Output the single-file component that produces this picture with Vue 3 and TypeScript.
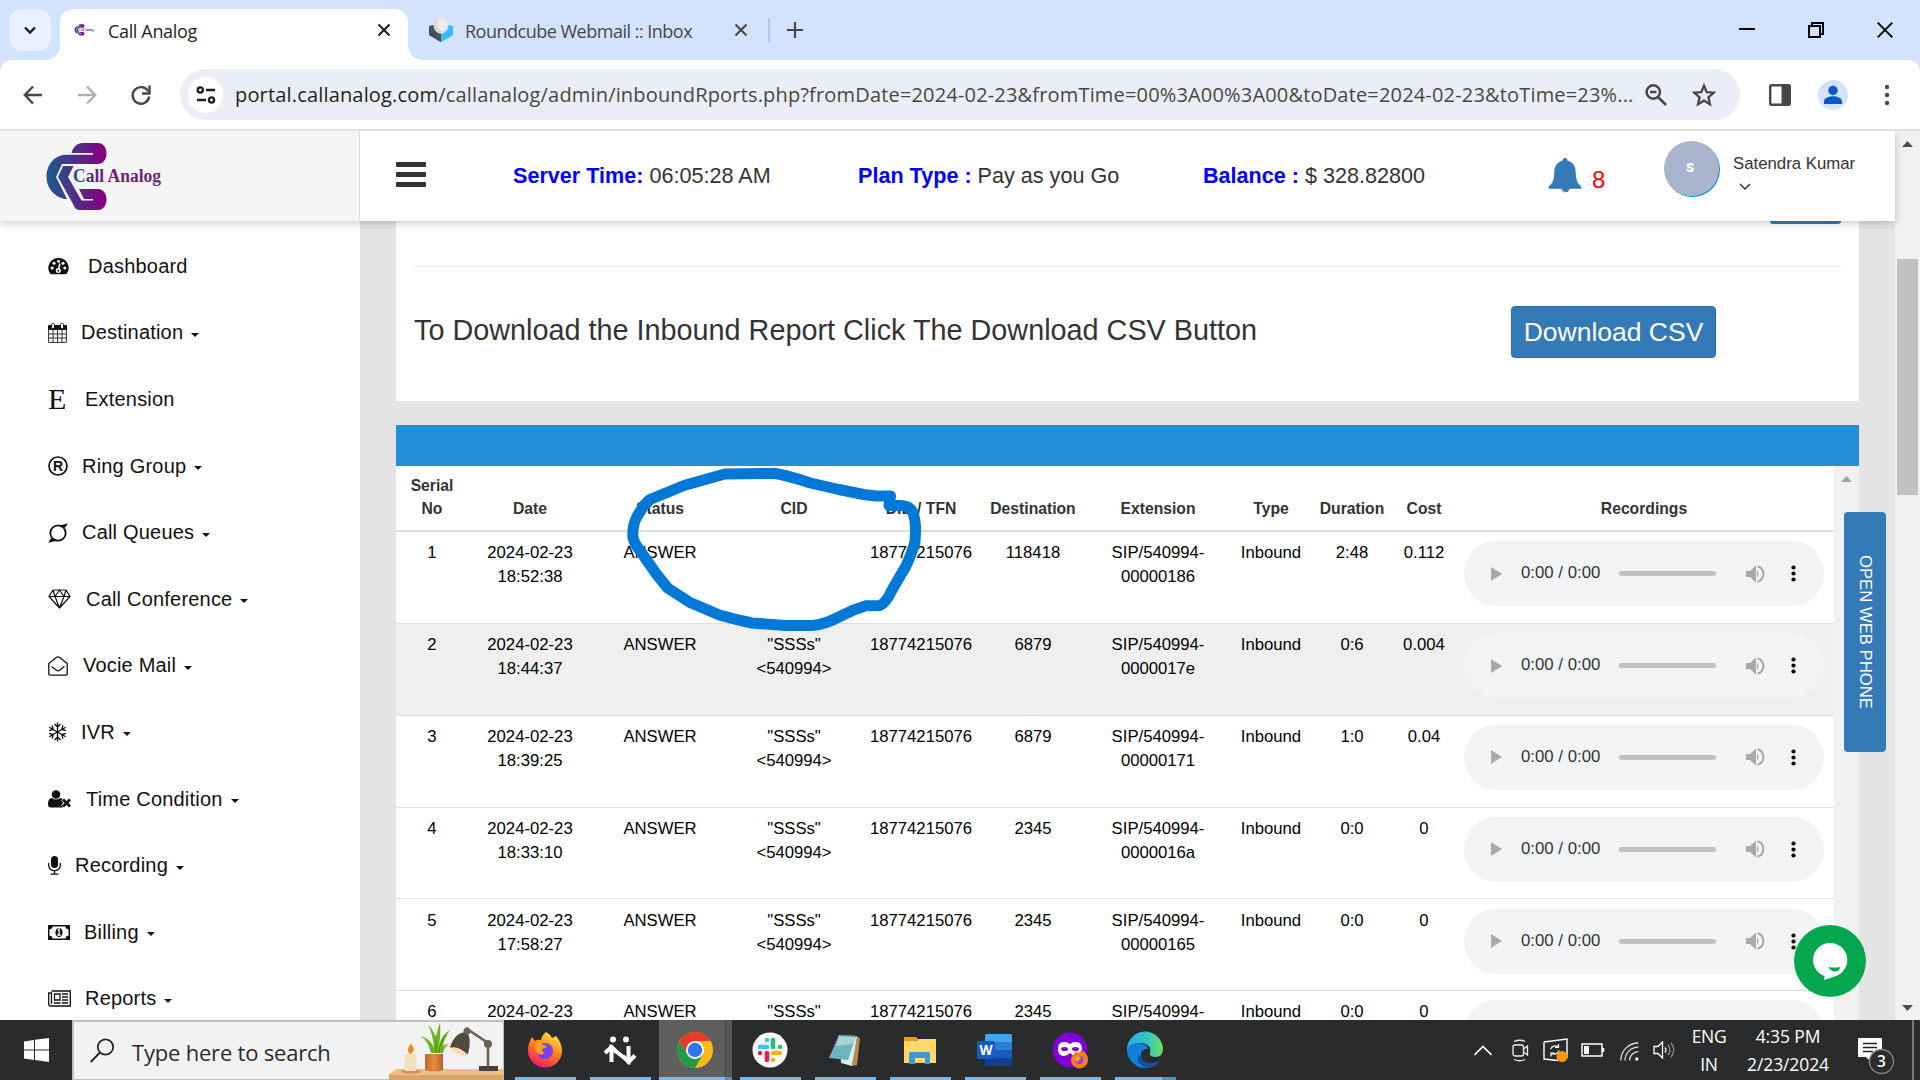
<script setup lang="ts">
interface MenuItem { label: string; icon: string; width: number; gap: number; caret: boolean }
interface Call { no: number; date: string; time: string; cid: boolean; dest: string; ext: string; dur: string; cost: string }

const menu: MenuItem[] = [
  { label: 'Dashboard', icon: 'dash', width: 21, gap: 19, caret: false },
  { label: 'Destination', icon: 'calendar', width: 19, gap: 14, caret: true },
  { label: 'Extension', icon: 'e', width: 18, gap: 19, caret: false },
  { label: 'Ring Group', icon: 'reg', width: 20, gap: 14, caret: true },
  { label: 'Call Queues', icon: 'queue', width: 20, gap: 14, caret: true },
  { label: 'Call Conference', icon: 'diamond', width: 23, gap: 15, caret: true },
  { label: 'Vocie Mail', icon: 'mail', width: 20, gap: 15, caret: true },
  { label: 'IVR', icon: 'snow', width: 19, gap: 14, caret: true },
  { label: 'Time Condition', icon: 'user', width: 23, gap: 15, caret: true },
  { label: 'Recording', icon: 'mic', width: 13, gap: 14, caret: true },
  { label: 'Billing', icon: 'money', width: 22, gap: 14, caret: true },
  { label: 'Reports', icon: 'news', width: 23, gap: 14, caret: true },
]

const columns: [string, number][] = [
  ['Serial No', 72], ['Date', 124], ['Status', 136], ['CID', 132], ['DID / TFN', 122], ['Destination', 102],
  ['Extension', 148], ['Type', 78], ['Duration', 84], ['Cost', 60], ['Recordings', 380],
]

const calls: Call[] = [
  { no: 1, date: '2024-02-23', time: '18:52:38', cid: false, dest: '118418', ext: '00000186', dur: '2:48', cost: '0.112' },
  { no: 2, date: '2024-02-23', time: '18:44:37', cid: true, dest: '6879', ext: '0000017e', dur: '0:6', cost: '0.004' },
  { no: 3, date: '2024-02-23', time: '18:39:25', cid: true, dest: '6879', ext: '00000171', dur: '1:0', cost: '0.04' },
  { no: 4, date: '2024-02-23', time: '18:33:10', cid: true, dest: '2345', ext: '0000016a', dur: '0:0', cost: '0' },
  { no: 5, date: '2024-02-23', time: '17:58:27', cid: true, dest: '2345', ext: '00000165', dur: '0:0', cost: '0' },
  { no: 6, date: '2024-02-23', time: '', cid: true, dest: '2345', ext: '', dur: '0:0', cost: '0' },
]
const hovered = 2

const apps = ['firefox', 'remote', 'chrome', 'slack', 'notepad', 'folder', 'word', 'private', 'edge']
</script>

<template>
  <div class="screen">
    <div class="tabstrip">
      <div class="tabsearch">
        <svg width="42" height="42" viewBox="0 0 42 42"><path d="M16 18.5l5 5 5-5" fill="none" stroke="#1f1f1f" stroke-width="2.4" /></svg>
      </div>
      <div class="tab active">
        <svg class="fav" width="20" height="14" viewBox="44 141 120 72">
          <use href="#brand" />
        </svg>
        <span class="tabtitle t1">Call Analog</span>
        <svg class="close" width="14" height="14" viewBox="0 0 14 14"><path d="M1.5 1.5l11 11m0-11l-11 11" stroke="#1f1f1f" stroke-width="2.1" /></svg>
      </div>
      <div class="tab other">
        <svg class="cube" width="26" height="26" viewBox="0 0 26 26">
          <path d="M1 9l12 7v9L1 18z" fill="#37474f" /><path d="M25 9l-12 7v9l12-7z" fill="#37beff" />
          <ellipse cx="13" cy="9" rx="8" ry="8.5" fill="#d8d8d8" /><ellipse cx="14.5" cy="7.5" rx="5.5" ry="6.5" fill="#ececec" />
          <path d="M1 9l4.500-1c0 5 3 8 7.500 9v8l-12-7z" fill="#465258" /><path d="M25 9l-4.500-1c0 5-3 8-7.500 9v8l12-7z" fill="#37beff" />
        </svg>
        <span class="tabtitle t2">Roundcube Webmail :: Inbox</span>
        <svg class="close" width="14" height="14" viewBox="0 0 14 14"><path d="M1.500 1.500l11 11m0-11l-11 11" stroke="#474747" stroke-width="2.100" /></svg>
      </div>
      <i class="tabsep"></i>
      <svg class="plus" width="16" height="16" viewBox="0 0 16 16"><path d="M8 0v16M0 8h16" stroke="#474747" stroke-width="2.200" /></svg>
      <div class="winbtns">
        <svg width="16" height="16" viewBox="0 0 16 16"><path d="M0 7h16" stroke="#000" stroke-width="2" /></svg>
        <svg width="16" height="16" viewBox="0 0 16 16"><path d="M1 4h11v11H1zM4 4V1h11v11h-3" fill="none" stroke="#000" stroke-width="2" /></svg>
        <svg width="16" height="16" viewBox="0 0 16 16"><path d="M.7.7l14.600 14.600m0-14.600L.7 15.300" stroke="#000" stroke-width="1.900" /></svg>
      </div>
    </div>

    <div class="toolbarwrap"><div class="toolbar">
      <svg class="back" width="20" height="20" viewBox="0 0 20 20"><path d="M19 10H2M10 1.500L1.800 10l8.200 8.500" fill="none" stroke="#474747" stroke-width="2.400" /></svg>
      <svg class="fwd" width="20" height="20" viewBox="0 0 20 20"><path d="M1 10h17M10 1.500l8.200 8.500-8.200 8.500" fill="none" stroke="#b0b0b0" stroke-width="2.400" /></svg>
      <svg class="reload" width="20" height="20" viewBox="0 0 20 20"><path d="M17.300 6.500A8.300 8.300 0 1 0 18.200 11.500" fill="none" stroke="#474747" stroke-width="2.400" /><path d="M18.500.5v8H11" fill="none" stroke="#474747" stroke-width="2.400" /></svg>
      <div class="omnibox">
        <span class="siteinfo"><svg width="20" height="18" viewBox="0 0 20 18"><g fill="none" stroke="#1f1f1f" stroke-width="2.400"><circle cx="4.300" cy="4" r="2.600" /><path d="M10 4h9M1 14h9" /><circle cx="15.500" cy="14" r="2.600" /></g></svg></span>
        <span class="url"><b>portal.callanalog.com</b>/callanalog/admin/inboundRports.php?fromDate=2024-02-23&amp;fromTime=00%3A00%3A00&amp;toDate=2024-02-23&amp;toTime=23%...</span>
        <svg class="zoomout" width="22" height="22" viewBox="0 0 22 22"><g fill="none" stroke="#474747" stroke-width="2.500"><circle cx="8.300" cy="8" r="6.700" /><path d="M13 13l8 8M5 8h6.500" /></g></svg>
        <svg class="star" width="24" height="24" viewBox="0 0 24 24"><path d="M12 2.600l2.700 6.500 7 .600-5.300 4.600 1.600 6.900-6-3.700-6 3.700 1.600-6.900L2.300 9.700l7-.600z" fill="none" stroke="#474747" stroke-width="2.300" /></svg>
      </div>
      <svg class="side" width="22" height="22" viewBox="0 0 22 22"><rect x="1.200" y="1.200" width="19.600" height="19.600" rx="1.500" fill="none" stroke="#474747" stroke-width="2.400" /><path d="M12.500 1h8.500v20h-8.500z" fill="#474747" /></svg>
      <span class="profile"><svg width="30" height="30" viewBox="0 0 30 30"><circle cx="15" cy="10.500" r="4.700" fill="#0b57d0" /><path d="M6 24v-2.500c0-4 6-5.300 9-5.300s9 1.300 9 5.300V24z" fill="#0b57d0" /></svg></span>
      <svg class="kebab" width="6" height="22" viewBox="0 0 6 22"><g fill="#474747"><circle cx="3" cy="3" r="2.200" /><circle cx="3" cy="11" r="2.200" /><circle cx="3" cy="19" r="2.200" /></g></svg>
    </div></div>

    <div class="page">
      <div class="site">
        <header class="head">
          <div class="brand">
            <svg width="130" height="72" viewBox="40 140 130 72">
              <defs>
                <linearGradient id="lg" gradientUnits="userSpaceOnUse" x1="46" y1="0" x2="104" y2="0"><stop offset="0" stop-color="#1a5c8c" /><stop offset="1" stop-color="#83017f" /></linearGradient>
                <linearGradient id="lt" gradientUnits="userSpaceOnUse" x1="73" y1="0" x2="161" y2="0"><stop offset="0" stop-color="#27488a" /><stop offset=".45" stop-color="#83107f" /><stop offset="1" stop-color="#5b3486" /></linearGradient>
                <g id="brand">
                  <path fill="url(#lg)" d="M71.500 153C73 147 77 143 83 143h15c5 0 8.500 4.500 8.500 10.500S103 164 98 164H62l-6 13 11 22h-3C53 196 46.500 187 46.500 177c0-12 8-22 19-22.300H93V153z" />
                  <path fill="url(#lg)" d="M63 166h10.500L68 177l13.500 23.500H93V199H84l-5-10h19c5 0 8.500 4.500 8.500 10.500S103 210 98 210H79c-3 0-4.500-3-6-6l-15-27z" />
                  <text x="73" y="182" font-family="Liberation Serif" font-weight="700" font-size="18.500" textLength="88" lengthAdjust="spacingAndGlyphs" fill="url(#lt)">Call Analog</text>
                </g>
              </defs>
              <use href="#brand" />
            </svg>
          </div>
          <div class="topbar">
            <div class="burger"><i></i><i></i><i></i></div>
            <span class="stat s1"><b>Server Time:</b> 06:05:28 AM</span>
            <span class="stat s2"><b>Plan Type :</b> Pay as you Go</span>
            <span class="stat s3"><b>Balance :</b> $ 328.82800</span>
            <svg class="bell" width="34" height="36" viewBox="0 0 34 36"><path d="M17 0c1.500 0 2.400 1 2.200 2.500C25 4 27.600 8.500 27.700 14c.1 8 2 11.500 5.500 14.500.8.800.3 2.200-1 2.200H21.500a4.600 4.600 0 0 1-9 0H1.800c-1.300 0-1.800-1.400-1-2.200C4.300 25.500 6.200 22 6.300 14 6.400 8.500 9 4 14.800 2.500 14.600 1 15.500 0 17 0z" fill="#337ab7" /><path d="M13.500 31c.3 2 1.500 3 3.300 3" fill="none" stroke="#fff" stroke-width="1" /></svg>
            <span class="count">8</span>
            <span class="avatar">S</span>
            <div class="who"><span>Satendra Kumar</span>
              <svg width="12" height="8" viewBox="0 0 12 8"><path d="M1 1l5 5 5-5" fill="none" stroke="#333" stroke-width="1.500" /></svg>
            </div>
          </div>
        </header>

        <div class="body">
          <nav class="sidebar">
            <a v-for="m in menu" :key="m.label" class="item">
              <span class="ico" :style="{ width: m.width + 'px', marginRight: m.gap + 'px' }">
                <svg v-if="m.icon === 'dash'" width="21" height="18" viewBox="0 0 21 18"><path d="M2 16.500A10.200 10.200 0 1 1 19 16.500q-.5.800-1.500.8h-14q-1 0-1.500-.8z" fill="#111" /><g fill="#fff"><circle cx="4.200" cy="11" r="1.500" /><circle cx="6" cy="6.300" r="1.500" /><circle cx="10.500" cy="4.300" r="1.500" /><circle cx="15" cy="6.300" r="1.500" /><circle cx="16.800" cy="11" r="1.500" /><circle cx="10.300" cy="13.500" r="2.500" /></g><path d="M10.300 13.500l1.600-7" stroke="#fff" stroke-width="1.500" /><circle cx="10.300" cy="13.800" r="1" fill="#111" /></svg>
                <svg v-else-if="m.icon === 'calendar'" width="19" height="20" viewBox="0 0 19 20"><path d="M0 3q0-1 1-1h17q1 0 1 1v4H0z" fill="#111" /><path d="M.6 7v12.400h17.800V7M.5 11h18M.5 15h18M5 7v12.500M9.500 7v12.500M14 7v12.500" fill="none" stroke="#333" stroke-width="1" /><rect x="3.500" y=".5" width="3" height="5" rx="1.200" fill="#fff" stroke="#111" /><rect x="12.500" y=".5" width="3" height="5" rx="1.200" fill="#fff" stroke="#111" /></svg>
                <span v-else-if="m.icon === 'e'" class="serif">E</span>
                <svg v-else-if="m.icon === 'reg'" width="20" height="20" viewBox="0 0 20 20"><circle cx="10" cy="10" r="9" fill="none" stroke="#111" stroke-width="1.700" /><text x="10.200" y="15" text-anchor="middle" font-family="Liberation Sans" font-weight="700" font-size="14" fill="#111">R</text></svg>
                <svg v-else-if="m.icon === 'queue'" width="20" height="20" viewBox="0 0 20 20"><circle cx="10" cy="10" r="7.700" fill="none" stroke="#111" stroke-width="1.800" /><path d="M8 2Q14 2.500 19.600.2 18 4.500 16 5zM12 18Q6 17.500.4 19.800 2 15.500 4 15z" fill="#111" /></svg>
                <svg v-else-if="m.icon === 'diamond'" width="23" height="20" viewBox="0 0 23 20"><path d="M5 1h13l4 6.500L11.500 19 1 7.500zM1 7.500h21M7 7.500L11.500 19 16 7.500M5 1l2 6.500L11.500 1 16 7.500 18 1" fill="none" stroke="#111" stroke-width="1.200" stroke-linejoin="round" /></svg>
                <svg v-else-if="m.icon === 'mail'" width="20" height="20" viewBox="0 0 20 20"><path d="M.8 7.500Q5 4 8.500 1.400q1.500-1 3 0Q15 4 19.200 7.500V18q0 1.200-1.200 1.200H2Q.8 19.200.8 18z" fill="none" stroke="#111" stroke-width="1.300" /><path d="M3.500 10.500l5 3.800q1.500 1 3 0l5-3.800" fill="none" stroke="#111" stroke-width="1.300" /></svg>
                <svg v-else-if="m.icon === 'snow'" width="19" height="20" viewBox="0 0 19 20"><g stroke="#111" stroke-width="1.300" fill="none"><g v-for="a in [0, 60, 120, 180, 240, 300]" :key="a" :transform="`rotate(${a} 9.500 10)`"><path d="M9.500 10V.5M6.500 2l3 3 3-3" /></g></g></svg>
                <svg v-else-if="m.icon === 'user'" width="23" height="18" viewBox="0 0 23 18"><circle cx="8" cy="4.500" r="4.300" fill="#111" /><path d="M0 14c0-4 1.500-6 3.800-6Q8 11 12.200 8c1 0 1.800.5 2.400 1.200l-1.300 1.300 2 2.200-2 2.200 1.800 2.300-1 .3H3Q0 17.500 0 14z" fill="#111" /><path d="M15 9.500l7 7m0-7l-7 7" stroke="#111" stroke-width="2.700" /></svg>
                <svg v-else-if="m.icon === 'mic'" width="13" height="19" viewBox="0 0 13 19"><rect x="3" y="0" width="7" height="12" rx="3.500" fill="#111" /><path d="M.7 7v2.500a5.800 5.200 0 0 0 11.600 0V7M6.500 15v3M2.500 18.200h8" fill="none" stroke="#111" stroke-width="1.300" /></svg>
                <svg v-else-if="m.icon === 'money'" width="22" height="15" viewBox="0 0 22 15"><rect x="0" y="0" width="22" height="15" fill="#111" /><path d="M4.500 1.500h13q0 2.800 3 2.800v6.400q-3 0-3 2.800h-13q0-2.800-3-2.800V4.300q3 0 3-2.800z" fill="#fff" /><ellipse cx="11" cy="7.500" rx="3.600" ry="4.600" fill="#111" /><path d="M9.700 5l1.300-.9v5.400M9.300 10h3.500" fill="none" stroke="#fff" stroke-width="1.300" /></svg>
                <svg v-else width="23" height="17" viewBox="0 0 23 17"><path d="M3.500 1h18.800v15H2.500Q.7 16 .7 14V3h2.800v11" fill="none" stroke="#111" stroke-width="1.300" /><path d="M6.500 4h5.500v6H6.500zM14 4h6M14 7h6M14 10h6M6 13h6.500M14 13h6" fill="none" stroke="#111" stroke-width="1.300" /></svg>
              </span>
              <span class="lbl">{{ m.label }}</span><i v-if="m.caret" class="caret"></i>
            </a>
          </nav>

          <main class="main">
            <section class="panel">
              <div class="stub"></div>
              <hr />
              <div class="dl"><h3>To Download the Inbound Report Click The Download CSV Button</h3><button>Download CSV</button></div>
            </section>
            <section class="report">
              <div class="bluebar"></div>
              <div class="scroller">
                <table>
                  <colgroup><col v-for="c in columns" :key="c[0]" :style="{ width: c[1] + 'px' }" /></colgroup>
                  <thead><tr><th v-for="c in columns" :key="c[0]">{{ c[0] }}</th></tr></thead>
                  <tbody>
                    <tr v-for="c in calls" :key="c.no" :class="{ hover: c.no === hovered }">
                      <td>{{ c.no }}</td><td>{{ c.date }}<br />{{ c.time }}</td><td>ANSWER</td>
                      <td><template v-if="c.cid">"SSSs"<template v-if="c.time"><br />&lt;540994&gt;</template></template></td>
                      <td>18774215076</td><td>{{ c.dest }}</td><td>SIP/540994-<br />{{ c.ext }}</td><td>Inbound</td><td>{{ c.dur }}</td><td>{{ c.cost }}</td>
                      <td class="rec">
                        <div class="player">
                          <template v-if="c.time">
                            <svg class="play" width="11" height="14" viewBox="0 0 11 14"><path d="M0 0l11 7-11 7z" fill="#a7a8a9" /></svg>
                            <span class="ptime">0:00 / 0:00</span><i class="track"></i>
                            <svg class="vol" width="19" height="18" viewBox="0 0 19 18"><path d="M0 6h4l6-5.500v17L4 12H0z" fill="#a7a8a9" /><path d="M11 5.200q3 3.800 0 7.600z" fill="#a7a8a9" /><path d="M11.500 1.300a8 8 0 0 1 0 15.400" fill="none" stroke="#a7a8a9" stroke-width="2" /></svg>
                            <svg class="dots" width="5" height="17" viewBox="0 0 5 17"><g fill="#000"><circle cx="2.500" cy="2.500" r="2.100" /><circle cx="2.500" cy="8.500" r="2.100" /><circle cx="2.500" cy="14.500" r="2.100" /></g></svg>
                          </template>
                        </div>
                      </td>
                    </tr>
                  </tbody>
                </table>
                <div class="innerbar"><svg width="11" height="6" viewBox="0 0 11 6"><path d="M0 6l5.500-6L11 6z" fill="#a3a3a3" /></svg></div>
              </div>
            </section>
          </main>
        </div>
      </div>
      <div class="pagebar">
        <svg width="11" height="6" viewBox="0 0 11 6"><path d="M0 6l5.500-6L11 6z" fill="#505050" /></svg>
        <i class="thumb"></i>
        <svg class="dn" width="11" height="6" viewBox="0 0 11 6"><path d="M0 0l5.500 6L11 0z" fill="#505050" /></svg>
      </div>
      <div class="webphone"><span>OPEN WEB PHONE</span></div>
      <svg class="chat" width="72" height="72" viewBox="0 0 72 72"><circle cx="36" cy="36" r="36" fill="#05a74e" /><g transform="translate(-.5 0)"><path d="M36.500 18a17 17 0 0 1 6 33Q36 53.500 30.500 55q.8-2 .3-4A17 17 0 0 1 36.500 18z" fill="#fff" /><path d="M35 42q6 1.200 12 0-1.500 4.500-5.500 4.500T35 42z" fill="#05a74e" /></g></svg>
    </div>

    <svg class="scribble" width="1920" height="1080" viewBox="0 0 1920 1080"><path d="M724.700 474Q750 474 773.700 473.300 786 475 810.400 483L839 489.500 863.500 494.500 876 496H890.500L889 505.500H899Q910 505 913 513 916 521 915.500 531L915 542Q912 553 906 566L892 590Q886 603 880 605.500L866 605.800Q855 609 843 615 823 625.500 812 625.500H786L752 623Q735 619.500 719.500 615L690 602.500 667.600 588 656 573.500 641 552Q633 542 632.800 536 632.500 525 637 516.500L643.500 506 650 499.500 684 485.500Z" /></svg>

    <footer class="taskbar">
      <div class="start"><svg width="25" height="24" viewBox="0 0 25 24"><path d="M0 3.400L10 2v9.400H0zM11 1.800L25 0v11.400H11zM0 12.500h10V22L0 20.600zM11 12.500h14V24l-14-1.900z" fill="#fff" /></svg></div>
      <div class="search">
        <svg class="mag" width="25" height="25" viewBox="0 0 25 25"><circle cx="15.500" cy="9" r="7.700" fill="none" stroke="#222" stroke-width="1.700" /><path d="M10 14.500L.7 24" stroke="#222" stroke-width="1.800" /></svg>
        <span>Type here to search</span>
        <svg class="art" width="114" height="58" viewBox="0 0 114 58">
          <defs><linearGradient id="pot" x1="0" x2="1"><stop offset="0" stop-color="#c06a2c" /><stop offset=".5" stop-color="#e58b45" /><stop offset="1" stop-color="#b5612a" /></linearGradient></defs>
          <path d="M0 52l8-5h106v11H0z" fill="#e8bf86" /><path d="M0 53h114v5H0z" fill="#d9a564" />
          <ellipse cx="22" cy="49.500" rx="10" ry="2" fill="#d08c5c" /><rect x="15.500" y="32" width="12" height="17" rx="1.500" fill="#f1e2bd" /><path d="M22 21.500q5.500 7-.5 11-5.500-4 .5-11z" fill="#f58a17" />
          <path d="M42 31Q39 18 31 14q10 2 14 12Q44 12 39 3q9 8 8 20 0-14 4-22 1 12-1 22Q53 12 61 8q-6 8-7 16 3-2 6-2-5 3-6 9z" fill="#6fb41c" /><path d="M47 31V13m3 18q1-12 8-18" stroke="#3d8a14" fill="none" />
          <path d="M36 32h18v16q-9 3-18 0z" fill="url(#pot)" />
          <path d="M61 25Q66 10 78 10q5 7 1 22-8 0-18-7z" fill="#51493f" /><path d="M61 26q8-3 18 7-9 3-18-7z" fill="#f7dfb0" />
          <path d="M77 10l1-3 21 14v26" fill="none" stroke="#6a6054" stroke-width="2.500" /><circle cx="78" cy="9" r="3.500" fill="#6a6054" /><circle cx="99" cy="22" r="4" fill="#6a6054" /><path d="M90 44h19v5H90z" fill="#463f36" />
        </svg>
      </div>
      <div class="apps">
        <div v-for="a in apps" :key="a" class="app" :class="a">
          <svg width="38" height="38" viewBox="0 0 38 38">
            <template v-if="a === 'firefox'">
              <defs><linearGradient id="fx" x1=".8" y1="0" x2=".3" y2="1"><stop offset="0" stop-color="#fff04a" /><stop offset=".45" stop-color="#ff8a16" /><stop offset="1" stop-color="#f5156c" /></linearGradient></defs>
              <path d="M20 1q4 2 6 6l4-2q6 7 6 15a17 16.500 0 0 1-34 0Q2 12 6 6l3 4q3-2 6-1 1-5 5-8z" fill="url(#fx)" /><circle cx="19" cy="20" r="8" fill="#7a3df0" /><path d="M9 13q6-3 8 1l4 1q-2 3-5 3 0 3 3 4-6 4-10-3z" fill="#ff9b1a" />
            </template>
            <g v-else-if="a === 'remote'" fill="none" stroke="#fff" stroke-width="4"><path d="M10.500 31V17L27.500 30V15" /><path d="M4 22l6.500-6 5 5M22 25l5.500 6 6.500-6.500" /><g fill="#fff" stroke="none"><circle cx="12" cy="8.500" r="3" /><circle cx="25" cy="8.500" r="3" /></g></g>
            <g v-else-if="a === 'chrome'"><circle cx="19" cy="19" r="18" fill="#fbbc14" /><path d="M3.400 10A18 18 0 0 1 34.600 10H19L11.200 23.500z" fill="#e33b2e" /><path d="M3.400 10A18 18 0 0 0 19 37l7.800-13.500L11.200 23.500z" fill="#229a48" /><circle cx="19" cy="19" r="9" fill="#fff" /><circle cx="19" cy="19" r="7.200" fill="#2f74e8" /></g>
            <g v-else-if="a === 'slack'"><circle cx="19" cy="19" r="17.500" fill="#fff" /><g stroke-width="4.600" stroke-linecap="round"><path d="M16 9v0M9 16h7" stroke="#36c5f0" /><path d="M22 9v7M29 16v0" stroke="#2eb67d" /><path d="M22 22h7M22 29v0" stroke="#ecb22e" /><path d="M16 22v7M9 22v0" stroke="#e01e5a" /></g></g>
            <g v-else-if="a === 'notepad'"><path d="M30 5l4 2-3 27-5 1z" fill="#b98a45" /><path d="M13 4l18 1-5 30-11-3z" fill="#d7eef2" /><path d="M13 4l17 1-8 24L3 27z" fill="#6fb3bf" /><path d="M13 4l17 1-3 8-17 2z" fill="#a6d3da" /><path d="M14 4l17 1" stroke="#555" stroke-width="2" stroke-dasharray="1.500 1" /></g>
            <g v-else-if="a === 'folder'"><path d="M3 6h12l3 3h-3v4H3z" fill="#e6a211" /><path d="M3 10h12l3-2h17v24H3z" fill="#ffd76b" /><path d="M8 33V23q0-2 2-2h17q2 0 2 2v10h-5v-6H14v6z" fill="#3d95dd" /></g>
            <g v-else-if="a === 'word'"><rect x="9" y="3" width="27" height="32" rx="1.500" fill="#41a5ee" /><path d="M9 11h27v8H9z" fill="#2b7cd3" /><path d="M9 19h27v8H9z" fill="#185abd" /><path d="M9 27h27v6.500q0 1.500-1.500 1.500h-24Q9 35 9 33.500z" fill="#103f91" /><rect x="1" y="10" width="18" height="18" rx="1.500" fill="#185abd" /><text x="10" y="24" text-anchor="middle" font-family="Open Sans" font-weight="700" font-size="13.500" fill="#fff">W</text></g>
            <g v-else-if="a === 'private'"><circle cx="19" cy="19" r="17.500" fill="#8000d7" /><path d="M7 18q0-7 6-7 4 0 6 2 2-2 6-2 6 0 6 7 0 7-6 7-3 0-6-3-3 3-6 3-6 0-6-7z" fill="#fff" /><ellipse cx="13.500" cy="18" rx="3.500" ry="2" fill="#8000d7" /><ellipse cx="24.500" cy="18" rx="3.500" ry="2" fill="#8000d7" /><path d="M25 20l3 2 2-3q7 3 7 10a8.500 8.500 0 0 1-17 0q0-4 3-6z" fill="#ff7a1f" /><circle cx="28.500" cy="29" r="4" fill="#8c43d8" /><path d="M24 26q3-2 5 0l1 2q-3 0-2 3-4 0-4-5z" fill="#ffa02a" /></g>
            <g v-else><defs><linearGradient id="eg" x1="0" x2="1"><stop offset="0" stop-color="#2aa6e0" /><stop offset=".6" stop-color="#33c8c4" /><stop offset="1" stop-color="#6fe04e" /></linearGradient></defs><path d="M1 19A18 18 0 0 1 37 18q0 7-7 8-7 0-6-4 2-8-7-10Q6 11 1 19z" fill="url(#eg)" /><path d="M1 19Q4 11 13 12q9 1 9 6-7-1-7 7 1 8 9 11Q14 39 7 32 1 27 1 19z" fill="#0f7fd8" /><path d="M14 24q2 8 11 8 5 0 9-3-3 6-10 8-9 0-12-7-1-4 2-6z" fill="#134f9c" /></g>
          </svg>
        </div>
      </div>
      <div class="tray">
        <svg class="up" width="18" height="11" viewBox="0 0 18 11"><path d="M.5 10L9 1.500l8.500 8.500" fill="none" stroke="#fff" stroke-width="1.600" /></svg>
        <svg class="cam" width="17" height="23" viewBox="0 0 17 23"><g fill="none" stroke="#eee" stroke-width="1.300"><rect x="1" y="6" width="10.500" height="11" rx="2" /><path d="M11.500 10l4-3v9l-4-3M2 2.500Q8 0 13 2.500M2 20.500q6 2.500 11 0" /></g></svg>
        <svg class="upd" width="26" height="24" viewBox="0 0 26 24"><g fill="none" stroke="#fff" stroke-width="1.400"><path d="M1 4l23-3v19M1 4v17l14 1.500" /><path d="M7.500 11q3-5 8-2m0-3v3.500H12M16 12.500q-2 5-8 3m0 3V15h3.500" stroke-width="1.200" /></g><circle cx="19" cy="18.500" r="5.500" fill="#ff9800" /></svg>
        <svg class="bat" width="24" height="14" viewBox="0 0 24 14"><path d="M1 1h20v12H1zM22.500 5v4" fill="none" stroke="#fff" stroke-width="1.500" /><path d="M3 3h5v8H3z" fill="#fff" /></svg>
        <svg class="wifi" width="19" height="19" viewBox="0 0 19 19"><g fill="none" stroke="#ddd" stroke-width="1.300"><path d="M.8 18.500A17.500 17.500 0 0 1 18.300 1M5 18.500A13.300 13.300 0 0 1 18.300 5.200M9.500 18.500a9 9 0 0 1 8.800-8.800" /></g><circle cx="16.800" cy="17" r="1.700" fill="#fff" /></svg>
        <svg class="spk" width="22" height="18" viewBox="0 0 22 18"><path d="M1 5.500h4l4.500-4.500v16L5 12.500H1z" fill="none" stroke="#fff" stroke-width="1.300" /><g fill="none" stroke-width="1.300"><path d="M12 6.500q2 2.500 0 5" stroke="#eee" /><path d="M15 4q4 5 0 10M18 2q5.500 7 0 14" stroke="#888" /></g></svg>
        <div class="lang"><span>ENG</span><span>IN</span></div>
        <div class="clock"><span>4:35 PM</span><span>2/23/2024</span></div>
        <svg class="note" width="38" height="38" viewBox="0 0 38 38"><path d="M1 1h24v19H15l-1 5-5-5H1z" fill="#fff" /><path d="M6 6.500h14M6 10.500h14M6 14.500h10" stroke="#222" stroke-width="1.300" /><circle cx="24.500" cy="24.500" r="12" fill="#2b2c2d" stroke="#888" stroke-width="1.300" /><text x="24.500" y="30" text-anchor="middle" font-family="Open Sans" font-size="15.500" font-weight="600" fill="#fff">3</text></svg>
        <i class="peek"></i>
      </div>
    </footer>
  </div>
</template>

<style>
body { margin: 0; overflow: hidden; }
</style>

<style scoped>
* { box-sizing: border-box; }
svg { display: block; flex: none; }
.screen { position: relative; width: 1920px; height: 1080px; display: flex; flex-direction: column; overflow: hidden; font-family: "Liberation Sans", Arial, sans-serif; background: #fff; }
.tabstrip { height: 60px; flex: none; background: #d3e3fd; display: flex; align-items: center; }
.tabsearch { margin-left: 9px; width: 42px; height: 42px; border-radius: 13px; background: #e9f1fe; }
.tab { display: flex; align-items: center; white-space: nowrap; }
.tab.active { position: relative; margin-left: 9px; width: 348px; height: 51px; align-self: flex-end; background: #fff; border-radius: 13px 13px 0 0; padding: 0 17px 9px 14px; }
.tab.active::before, .tab.active::after { content: ''; position: absolute; bottom: 0; width: 14px; height: 14px; }
.tab.active::before { left: -14px; background: radial-gradient(circle at 0 0, transparent 13.500px, #fff 14px); }
.tab.active::after { right: -14px; background: radial-gradient(circle at 100% 0, transparent 13.500px, #fff 14px); }
.tabtitle { font: 18px "Open Sans", sans-serif; color: #1f1f1f; margin-top: 2px; }
.t1 { margin-left: 14px; letter-spacing: -.35px; }
.t2 { margin-left: 11px; letter-spacing: -.5px; color: #474747; }
.close { margin-left: auto; }
.tab.other { width: 340px; padding-left: 20px; }
.tabsep { margin-left: 20px; width: 2px; height: 24px; background: #a8c7fa; }
.plus { margin-left: 17px; }
.winbtns { margin-left: auto; margin-right: 27px; display: flex; gap: 53px; }
.toolbarwrap { background: #d3e3fd; flex: none; }
.toolbar { height: 71px; background: #fff; border-radius: 12px 12px 0 0; border-bottom: 2px solid #dfe0e1; display: flex; align-items: center; }
.back { margin-left: 23px; }
.fwd { margin-left: 34px; }
.reload { margin-left: 34px; }
.omnibox { margin-left: 29px; width: 1560px; height: 51px; border-radius: 26px; background: #ebeef7; display: flex; align-items: center; padding-left: 8px; white-space: nowrap; }
.siteinfo { width: 35px; height: 36px; border-radius: 18px; background: #fff; display: flex; align-items: center; justify-content: center; flex: none; }
.url { margin-left: 12px; width: 1398px; font: 20px "Open Sans", sans-serif; color: #474747; letter-spacing: .17px; flex: none; }
.url b { font-weight: 400; color: #1f1f1f; }
.zoomout { margin-left: 12px; }
.star { margin-left: 25px; }
.side { margin-left: 29px; }
.profile { margin-left: 27px; width: 30px; height: 30px; border-radius: 50%; background: #d3e3fd; }
.kebab { margin-left: 36px; }

.page { position: relative; flex: 1; min-height: 0; display: flex; overflow: hidden; }
.site { width: 1895px; display: flex; flex-direction: column; }
.head { position: relative; z-index: 2; height: 90px; flex: none; display: flex; box-shadow: 0 2px 8px rgba(0, 0, 0, .22); }
.brand { width: 360px; background: #f5f5f5; border-right: 1px solid #ddd; padding: 9px 0 0 40px; }
.topbar { flex: 1; background: #fff; display: flex; align-items: center; white-space: nowrap; padding-left: 36px; }
.burger { width: 30px; display: flex; flex-direction: column; gap: 5px; margin-top: -3px; }
.burger i { height: 5px; border-radius: 1px; background: #333; }
.stat { font-size: 21.600px; color: #333; margin-top: -1px; flex: none; }
.stat b { color: #00f; }
.s1 { width: 345px; margin-left: 87px; }
.s2 { width: 345px; }
.s3 { width: 345px; }
.bell { margin-top: -1px; }
.count { font-size: 24px; color: #f00; margin: 8px 0 0 10px; width: 14px; }
.avatar { margin: -16px 0 0 58px; width: 55px; height: 55px; border-radius: 50%; background: #aab4cc; box-shadow: 1px 1px 0 #2190d9; color: #fff; font: 900 13px Roboto, sans-serif; display: flex; align-items: center; justify-content: center; padding-right: 3px; padding-bottom: 2px; }
.who { margin: -7px 0 0 14px; font-size: 16.800px; color: #333; }
.who svg { margin: 9px 0 0 6px; }

.body { flex: 1; min-height: 0; display: flex; overflow: hidden; }
.sidebar { width: 360px; background: #fff; padding-top: 12px; flex: none; }
.item { height: 66.600px; padding-left: 48px; display: flex; align-items: center; color: #111; font-size: 20px; letter-spacing: .2px; }
.ico { flex: none; }
.serif { font: 30px/30px "Liberation Serif", serif; }
.lbl { white-space: nowrap; }
.caret { margin: 4px 0 0 8px; border: 4px solid transparent; border-top-color: #111; border-bottom: 0; }
.main { flex: 1; background: #e4e4e4; padding: 0 36px; }
.panel { height: 180px; background: #fff; padding: 0 18px; }
.stub { width: 71px; height: 3px; margin-left: auto; background: #337ab7; border-radius: 0 0 4px 4px; }
.panel hr { margin: 42px 0 0; border: 0; height: 1px; background: #eaeaea; }
.dl { display: flex; margin-top: 39px; height: 52px; align-items: center; justify-content: space-between; padding-right: 125px; white-space: nowrap; }
h3 { margin: -3px 0 0; font-weight: 400; font-size: 28.800px; color: #333; }
.dl button { width: 205px; height: 52px; padding: 0; font: 26.500px "Liberation Sans", Arial, sans-serif; color: #fff; background: #337ab7; border: 1px solid #2e6da4; border-radius: 4px; }
.report { margin-top: 24px; }
.bluebar { height: 41px; background: #2190d9; }
.scroller { height: 560px; overflow: hidden; background: #fff; display: flex; align-items: stretch; }
table { width: 1438px; flex: none; table-layout: fixed; border-collapse: separate; border-spacing: 0; align-self: flex-start; }
th { height: 66px; padding: 0 8px 10px; vertical-align: bottom; font-size: 15.700px; line-height: 23px; color: #333; border-bottom: 2px solid #ddd; }
td { height: 91.850px; padding: 9.200px 0 0; vertical-align: top; text-align: center; font-size: 16.700px; line-height: 24px; color: #000; border-bottom: 1px solid #ddd; }
tr.hover { background: #efefef; }
.player { width: 360px; height: 65px; margin-left: 10px; border-radius: 33px; background: #f1f3f4; display: flex; align-items: center; }
.play { margin-left: 27px; }
.ptime { margin: -1px 0 0 19px; width: 98px; text-align: left; font-size: 16.800px; color: #333; }
.track { width: 97px; height: 5px; border-radius: 3px; background: #bfc1c2; }
.vol { margin-left: 30px; }
.dots { margin-left: 26px; }
.innerbar { width: 25px; background: #f1f1f1; padding: 10px 0 0 7px; }
.pagebar { width: 25px; background: #f1f1f1; padding: 10px 2px 9px; display: flex; flex-direction: column; align-items: center; }
.thumb { margin-top: 112px; width: 21px; height: 236px; background: #c1c1c1; }
.dn { margin-top: auto; }
.webphone { position: absolute; z-index: 3; left: 1844px; top: 381px; width: 42px; height: 240px; border-radius: 4px; background: #337ab7; color: #fff; display: flex; align-items: center; justify-content: center; }
.webphone span { writing-mode: vertical-rl; font-size: 16.700px; white-space: nowrap; }
.chat { position: absolute; z-index: 4; left: 1794px; top: 794px; }
.scribble { position: absolute; z-index: 5; left: 0; top: 0; pointer-events: none; }
.scribble path { fill: none; stroke: #0078d7; stroke-width: 11px; stroke-linejoin: round; }

.taskbar { position: relative; z-index: 6; height: 60px; flex: none; background: #2a2b2c; display: flex; }
.start { width: 72px; display: flex; align-items: center; padding-left: 24px; }
.search { width: 432px; background: #f2f2f2; border: 2px solid #bfbfbf; border-bottom-width: 1px; border-right-width: 1px; display: flex; align-items: center; }
.mag { margin-left: 16px; }
.search span { margin: 2px 0 0 17px; width: 210px; white-space: nowrap; font: 22px "Open Sans", sans-serif; letter-spacing: -.2px; color: #2b2b2b; }
.art { margin-left: auto; }
.apps { display: flex; margin-left: 3px; }
.app { position: relative; width: 75px; display: flex; align-items: center; justify-content: center; }
.app::after { content: ''; position: absolute; bottom: 0; left: 8px; width: 61px; height: 3px; background: #76b9ed; }
.chrome { background: linear-gradient(90deg, transparent 2px, #5e5e5d 2px 68px, #414141 68px 69px, #575757 69px 75px); }
.chrome::after { left: 2px; width: 73px; background: linear-gradient(90deg, #76b9ed 66px, #5f8db4 66px); }
.edge::after { background: linear-gradient(90deg, #76b9ed 47px, #5f8db4 47px); }
.tray { margin-left: auto; display: flex; align-items: center; color: #fff; font: 17.500px "Open Sans", sans-serif; }
.cam { margin-left: 20px; }
.upd { margin-left: 14px; }
.bat { margin-left: 12px; }
.wifi { margin: 3px 0 0 15px; }
.spk { margin-left: 14px; }
.lang, .clock { display: flex; flex-direction: column; align-items: center; line-height: 28px; white-space: nowrap; letter-spacing: -.3px; }
.lang { width: 44px; margin-left: 12px; }
.clock { width: 100px; margin-left: 7px; letter-spacing: -.1px; }
.note { margin: 12px 0 0 19px; }
.peek { align-self: stretch; width: 2px; background: #777; margin: 0 6px 0 17px; }
</style>
